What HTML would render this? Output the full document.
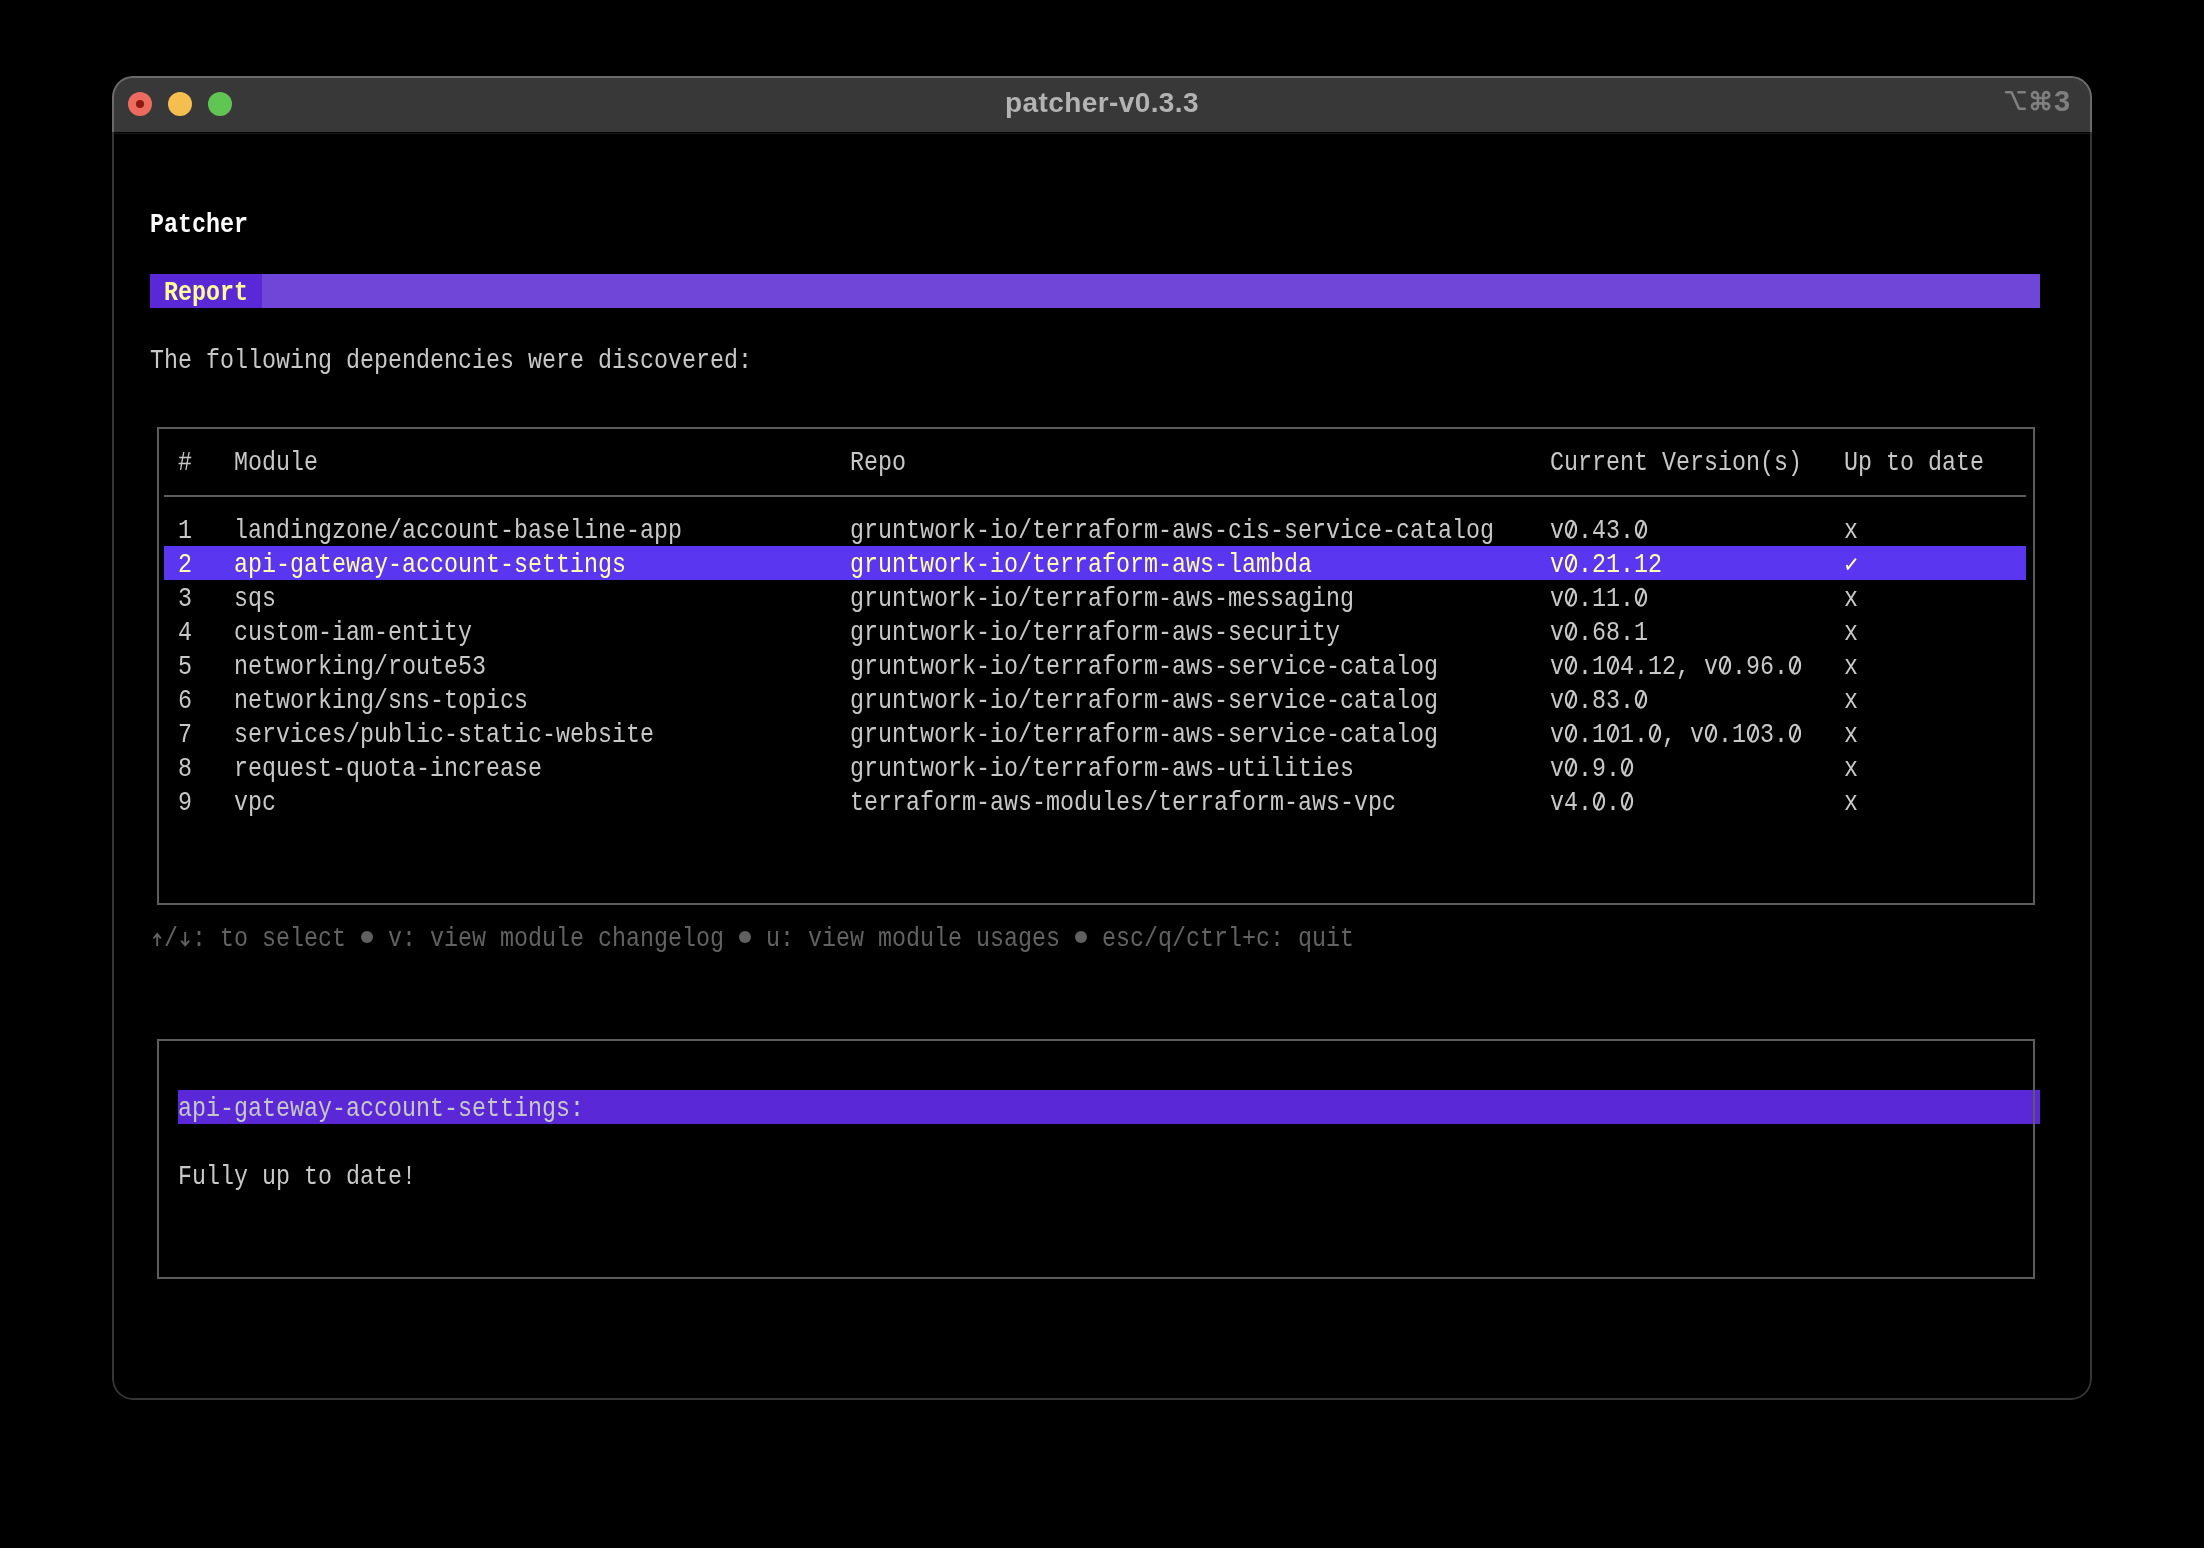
<!DOCTYPE html>
<html><head><meta charset="utf-8"><style>
html,body{margin:0;padding:0;background:#000;width:2204px;height:1548px;overflow:hidden;}
.win{position:absolute;left:112px;top:76px;width:1980px;height:1324px;border-radius:21px;background:#000;overflow:hidden;}
.tb{position:absolute;left:0;top:0;width:1980px;height:56px;background:#383838;}
.fr1{position:absolute;left:0;top:0;width:1980px;height:1324px;box-sizing:border-box;border:2px solid #363636;border-radius:21px;}
.fr2{position:absolute;left:0;top:0;width:1980px;height:56px;box-sizing:border-box;border:2px solid #6a6a6a;border-bottom:none;border-radius:21px 21px 0 0;}
.tl{position:absolute;width:24px;height:24px;border-radius:50%;top:16px;}
.title{position:absolute;left:0;width:1980px;top:0;height:56px;text-align:center;font-family:"Liberation Sans",sans-serif;font-weight:bold;font-size:28px;letter-spacing:0.4px;line-height:54px;color:#b3b3b3;will-change:transform;}
.t{position:absolute;will-change:transform;white-space:pre;font-family:"Liberation Mono",monospace;font-size:23.333px;line-height:34px;height:34px;transform-origin:0 23.2px;transform:scaleY(1.16);}
.r{position:absolute;}
</style></head><body>
<div class="win">
  <div class="tb"></div>
  <div style="position:absolute;left:0;top:56px;width:1980px;height:1px;background:#000"></div>
  <div style="position:absolute;left:0;top:57px;width:1980px;height:1px;background:#161616"></div>
  <div class="fr1"></div>
  <div class="fr2"></div>
  <div class="tl" style="left:16px;background:#ed6a5e"><div style="position:absolute;left:8px;top:8px;width:8px;height:8px;border-radius:50%;background:#8e1a10"></div></div>
  <div class="tl" style="left:56px;background:#f5bf4f"></div>
  <div class="tl" style="left:96px;background:#61c554"></div>
  <div class="title">patcher-v0.3.3</div>
  <svg style="position:absolute;left:1880px;top:8px" width="90" height="40" viewBox="1992 84 90 40">
    <g fill="none" stroke="#7f7f7f" stroke-width="2.6" stroke-linecap="round" stroke-linejoin="round">
      <path d="M2006.1 92.3 H2011.6 L2019 108.7 H2024.7"/>
      <path d="M2018.4 92.3 H2024.7"/>
      <path d="M2037.9 98 H2043.3 V103.4 H2037.9 Z M2037.9 98 V95.05 A2.95 2.95 0 1 0 2034.95 98 H2037.9 M2043.3 98 V95.05 A2.95 2.95 0 1 1 2046.25 98 H2043.3 M2043.3 103.4 V106.35 A2.95 2.95 0 1 0 2046.25 103.4 H2043.3 M2037.9 103.4 V106.35 A2.95 2.95 0 1 1 2034.95 103.4 H2037.9"/>
    </g>
  </svg>
  <div style="position:absolute;left:1942px;top:5px;font-family:'Liberation Sans',sans-serif;font-weight:bold;font-size:29px;line-height:40px;color:#7f7f7f;will-change:transform">3</div>
</div>
<div class="r" style="left:262px;top:274px;width:1778px;height:34px;background:#6f46d7"></div>
<div class="r" style="left:150px;top:274px;width:112px;height:34px;background:#5a28d6"></div>
<div class="r" style="left:164px;top:546px;width:1862px;height:34px;background:#5a36f0"></div>
<div class="r" style="left:178px;top:1090px;width:1862px;height:34px;background:#5a28d6"></div>
<div class="r" style="left:157px;top:427px;width:1878px;height:2px;background:#5c5c5c"></div>
<div class="r" style="left:157px;top:903px;width:1878px;height:2px;background:#5c5c5c"></div>
<div class="r" style="left:157px;top:427px;width:2px;height:478px;background:#5c5c5c"></div>
<div class="r" style="left:2033px;top:427px;width:2px;height:478px;background:#5c5c5c"></div>
<div class="r" style="left:164px;top:495px;width:1862px;height:2px;background:#5c5c5c"></div>
<div class="r" style="left:157px;top:1039px;width:1878px;height:2px;background:#5c5c5c"></div>
<div class="r" style="left:157px;top:1277px;width:1878px;height:2px;background:#5c5c5c"></div>
<div class="r" style="left:157px;top:1039px;width:2px;height:240px;background:#5c5c5c"></div>
<div class="r" style="left:2033px;top:1039px;width:2px;height:240px;background:#5c5c5c"></div>
<div class="t" style="top:208.8px;left:150px;color:#ffffff;font-weight:bold;">Patcher</div>
<div class="t" style="top:276.8px;left:164px;color:#fffb96;font-weight:bold;">Report</div>
<div class="t" style="top:344.8px;left:150px;color:#c8c8c8;">The following dependencies were discovered:</div>
<div class="t" style="top:446.8px;left:178px;color:#c8c8c8;">#</div>
<div class="t" style="top:446.8px;left:234px;color:#c8c8c8;">Module</div>
<div class="t" style="top:446.8px;left:850px;color:#c8c8c8;">Repo</div>
<div class="t" style="top:446.8px;left:1550px;color:#c8c8c8;">Current Version(s)</div>
<div class="t" style="top:446.8px;left:1844px;color:#c8c8c8;">Up to date</div>
<div class="t" style="top:514.8px;left:178px;color:#c8c8c8;">1</div>
<div class="t" style="top:514.8px;left:234px;color:#c8c8c8;">landingzone/account-baseline-app</div>
<div class="t" style="top:514.8px;left:850px;color:#c8c8c8;">gruntwork-io/terraform-aws-cis-service-catalog</div>
<svg class="r" style="left:1564px;top:512px" width="14" height="34"><ellipse cx="7" cy="17.2" rx="5.1" ry="8.5" fill="none" stroke="#c8c8c8" stroke-width="2.1"/><path d="M4.4 24.6 L9.8 10.2" stroke="#c8c8c8" stroke-width="2" fill="none"/></svg>
<svg class="r" style="left:1634px;top:512px" width="14" height="34"><ellipse cx="7" cy="17.2" rx="5.1" ry="8.5" fill="none" stroke="#c8c8c8" stroke-width="2.1"/><path d="M4.4 24.6 L9.8 10.2" stroke="#c8c8c8" stroke-width="2" fill="none"/></svg>
<div class="t" style="top:514.8px;left:1550px;color:#c8c8c8;">v .43. </div>
<div class="t" style="top:514.8px;left:1844px;color:#c8c8c8;">x</div>
<div class="t" style="top:548.8px;left:178px;color:#ffffaf;">2</div>
<div class="t" style="top:548.8px;left:234px;color:#ffffaf;">api-gateway-account-settings</div>
<div class="t" style="top:548.8px;left:850px;color:#ffffaf;">gruntwork-io/terraform-aws-lambda</div>
<svg class="r" style="left:1564px;top:546px" width="14" height="34"><ellipse cx="7" cy="17.2" rx="5.1" ry="8.5" fill="none" stroke="#ffffaf" stroke-width="2.1"/><path d="M4.4 24.6 L9.8 10.2" stroke="#ffffaf" stroke-width="2" fill="none"/></svg>
<div class="t" style="top:548.8px;left:1550px;color:#ffffaf;">v .21.12</div>
<svg class="r" style="left:1844px;top:546px" width="14" height="34" viewBox="0 0 14 34"><path d="M3 19.8 L3.8 22.9 L11.5 13.2" stroke="#ffffaf" stroke-width="2" fill="none" stroke-linecap="round" stroke-linejoin="round"/></svg>
<div class="t" style="top:582.8px;left:178px;color:#c8c8c8;">3</div>
<div class="t" style="top:582.8px;left:234px;color:#c8c8c8;">sqs</div>
<div class="t" style="top:582.8px;left:850px;color:#c8c8c8;">gruntwork-io/terraform-aws-messaging</div>
<svg class="r" style="left:1564px;top:580px" width="14" height="34"><ellipse cx="7" cy="17.2" rx="5.1" ry="8.5" fill="none" stroke="#c8c8c8" stroke-width="2.1"/><path d="M4.4 24.6 L9.8 10.2" stroke="#c8c8c8" stroke-width="2" fill="none"/></svg>
<svg class="r" style="left:1634px;top:580px" width="14" height="34"><ellipse cx="7" cy="17.2" rx="5.1" ry="8.5" fill="none" stroke="#c8c8c8" stroke-width="2.1"/><path d="M4.4 24.6 L9.8 10.2" stroke="#c8c8c8" stroke-width="2" fill="none"/></svg>
<div class="t" style="top:582.8px;left:1550px;color:#c8c8c8;">v .11. </div>
<div class="t" style="top:582.8px;left:1844px;color:#c8c8c8;">x</div>
<div class="t" style="top:616.8px;left:178px;color:#c8c8c8;">4</div>
<div class="t" style="top:616.8px;left:234px;color:#c8c8c8;">custom-iam-entity</div>
<div class="t" style="top:616.8px;left:850px;color:#c8c8c8;">gruntwork-io/terraform-aws-security</div>
<svg class="r" style="left:1564px;top:614px" width="14" height="34"><ellipse cx="7" cy="17.2" rx="5.1" ry="8.5" fill="none" stroke="#c8c8c8" stroke-width="2.1"/><path d="M4.4 24.6 L9.8 10.2" stroke="#c8c8c8" stroke-width="2" fill="none"/></svg>
<div class="t" style="top:616.8px;left:1550px;color:#c8c8c8;">v .68.1</div>
<div class="t" style="top:616.8px;left:1844px;color:#c8c8c8;">x</div>
<div class="t" style="top:650.8px;left:178px;color:#c8c8c8;">5</div>
<div class="t" style="top:650.8px;left:234px;color:#c8c8c8;">networking/route53</div>
<div class="t" style="top:650.8px;left:850px;color:#c8c8c8;">gruntwork-io/terraform-aws-service-catalog</div>
<svg class="r" style="left:1564px;top:648px" width="14" height="34"><ellipse cx="7" cy="17.2" rx="5.1" ry="8.5" fill="none" stroke="#c8c8c8" stroke-width="2.1"/><path d="M4.4 24.6 L9.8 10.2" stroke="#c8c8c8" stroke-width="2" fill="none"/></svg>
<svg class="r" style="left:1606px;top:648px" width="14" height="34"><ellipse cx="7" cy="17.2" rx="5.1" ry="8.5" fill="none" stroke="#c8c8c8" stroke-width="2.1"/><path d="M4.4 24.6 L9.8 10.2" stroke="#c8c8c8" stroke-width="2" fill="none"/></svg>
<svg class="r" style="left:1718px;top:648px" width="14" height="34"><ellipse cx="7" cy="17.2" rx="5.1" ry="8.5" fill="none" stroke="#c8c8c8" stroke-width="2.1"/><path d="M4.4 24.6 L9.8 10.2" stroke="#c8c8c8" stroke-width="2" fill="none"/></svg>
<svg class="r" style="left:1788px;top:648px" width="14" height="34"><ellipse cx="7" cy="17.2" rx="5.1" ry="8.5" fill="none" stroke="#c8c8c8" stroke-width="2.1"/><path d="M4.4 24.6 L9.8 10.2" stroke="#c8c8c8" stroke-width="2" fill="none"/></svg>
<div class="t" style="top:650.8px;left:1550px;color:#c8c8c8;">v .1 4.12, v .96. </div>
<div class="t" style="top:650.8px;left:1844px;color:#c8c8c8;">x</div>
<div class="t" style="top:684.8px;left:178px;color:#c8c8c8;">6</div>
<div class="t" style="top:684.8px;left:234px;color:#c8c8c8;">networking/sns-topics</div>
<div class="t" style="top:684.8px;left:850px;color:#c8c8c8;">gruntwork-io/terraform-aws-service-catalog</div>
<svg class="r" style="left:1564px;top:682px" width="14" height="34"><ellipse cx="7" cy="17.2" rx="5.1" ry="8.5" fill="none" stroke="#c8c8c8" stroke-width="2.1"/><path d="M4.4 24.6 L9.8 10.2" stroke="#c8c8c8" stroke-width="2" fill="none"/></svg>
<svg class="r" style="left:1634px;top:682px" width="14" height="34"><ellipse cx="7" cy="17.2" rx="5.1" ry="8.5" fill="none" stroke="#c8c8c8" stroke-width="2.1"/><path d="M4.4 24.6 L9.8 10.2" stroke="#c8c8c8" stroke-width="2" fill="none"/></svg>
<div class="t" style="top:684.8px;left:1550px;color:#c8c8c8;">v .83. </div>
<div class="t" style="top:684.8px;left:1844px;color:#c8c8c8;">x</div>
<div class="t" style="top:718.8px;left:178px;color:#c8c8c8;">7</div>
<div class="t" style="top:718.8px;left:234px;color:#c8c8c8;">services/public-static-website</div>
<div class="t" style="top:718.8px;left:850px;color:#c8c8c8;">gruntwork-io/terraform-aws-service-catalog</div>
<svg class="r" style="left:1564px;top:716px" width="14" height="34"><ellipse cx="7" cy="17.2" rx="5.1" ry="8.5" fill="none" stroke="#c8c8c8" stroke-width="2.1"/><path d="M4.4 24.6 L9.8 10.2" stroke="#c8c8c8" stroke-width="2" fill="none"/></svg>
<svg class="r" style="left:1606px;top:716px" width="14" height="34"><ellipse cx="7" cy="17.2" rx="5.1" ry="8.5" fill="none" stroke="#c8c8c8" stroke-width="2.1"/><path d="M4.4 24.6 L9.8 10.2" stroke="#c8c8c8" stroke-width="2" fill="none"/></svg>
<svg class="r" style="left:1648px;top:716px" width="14" height="34"><ellipse cx="7" cy="17.2" rx="5.1" ry="8.5" fill="none" stroke="#c8c8c8" stroke-width="2.1"/><path d="M4.4 24.6 L9.8 10.2" stroke="#c8c8c8" stroke-width="2" fill="none"/></svg>
<svg class="r" style="left:1704px;top:716px" width="14" height="34"><ellipse cx="7" cy="17.2" rx="5.1" ry="8.5" fill="none" stroke="#c8c8c8" stroke-width="2.1"/><path d="M4.4 24.6 L9.8 10.2" stroke="#c8c8c8" stroke-width="2" fill="none"/></svg>
<svg class="r" style="left:1746px;top:716px" width="14" height="34"><ellipse cx="7" cy="17.2" rx="5.1" ry="8.5" fill="none" stroke="#c8c8c8" stroke-width="2.1"/><path d="M4.4 24.6 L9.8 10.2" stroke="#c8c8c8" stroke-width="2" fill="none"/></svg>
<svg class="r" style="left:1788px;top:716px" width="14" height="34"><ellipse cx="7" cy="17.2" rx="5.1" ry="8.5" fill="none" stroke="#c8c8c8" stroke-width="2.1"/><path d="M4.4 24.6 L9.8 10.2" stroke="#c8c8c8" stroke-width="2" fill="none"/></svg>
<div class="t" style="top:718.8px;left:1550px;color:#c8c8c8;">v .1 1. , v .1 3. </div>
<div class="t" style="top:718.8px;left:1844px;color:#c8c8c8;">x</div>
<div class="t" style="top:752.8px;left:178px;color:#c8c8c8;">8</div>
<div class="t" style="top:752.8px;left:234px;color:#c8c8c8;">request-quota-increase</div>
<div class="t" style="top:752.8px;left:850px;color:#c8c8c8;">gruntwork-io/terraform-aws-utilities</div>
<svg class="r" style="left:1564px;top:750px" width="14" height="34"><ellipse cx="7" cy="17.2" rx="5.1" ry="8.5" fill="none" stroke="#c8c8c8" stroke-width="2.1"/><path d="M4.4 24.6 L9.8 10.2" stroke="#c8c8c8" stroke-width="2" fill="none"/></svg>
<svg class="r" style="left:1620px;top:750px" width="14" height="34"><ellipse cx="7" cy="17.2" rx="5.1" ry="8.5" fill="none" stroke="#c8c8c8" stroke-width="2.1"/><path d="M4.4 24.6 L9.8 10.2" stroke="#c8c8c8" stroke-width="2" fill="none"/></svg>
<div class="t" style="top:752.8px;left:1550px;color:#c8c8c8;">v .9. </div>
<div class="t" style="top:752.8px;left:1844px;color:#c8c8c8;">x</div>
<div class="t" style="top:786.8px;left:178px;color:#c8c8c8;">9</div>
<div class="t" style="top:786.8px;left:234px;color:#c8c8c8;">vpc</div>
<div class="t" style="top:786.8px;left:850px;color:#c8c8c8;">terraform-aws-modules/terraform-aws-vpc</div>
<svg class="r" style="left:1592px;top:784px" width="14" height="34"><ellipse cx="7" cy="17.2" rx="5.1" ry="8.5" fill="none" stroke="#c8c8c8" stroke-width="2.1"/><path d="M4.4 24.6 L9.8 10.2" stroke="#c8c8c8" stroke-width="2" fill="none"/></svg>
<svg class="r" style="left:1620px;top:784px" width="14" height="34"><ellipse cx="7" cy="17.2" rx="5.1" ry="8.5" fill="none" stroke="#c8c8c8" stroke-width="2.1"/><path d="M4.4 24.6 L9.8 10.2" stroke="#c8c8c8" stroke-width="2" fill="none"/></svg>
<div class="t" style="top:786.8px;left:1550px;color:#c8c8c8;">v4. . </div>
<div class="t" style="top:786.8px;left:1844px;color:#c8c8c8;">x</div>
<div class="t" style="top:922.8px;left:150px;color:#626262;"> / : to select   v: view module changelog   u: view module usages   esc/q/ctrl+c: quit</div>
<svg class="r" style="left:150px;top:920px" width="42" height="34" viewBox="150 920 42 34"><g fill="none" stroke="#626262" stroke-width="1.9" stroke-linecap="butt" stroke-linejoin="miter"><path d="M157.2 946 V934.5 M153.6 938.3 L157.2 934 L160.8 938.3"/><path d="M185.2 932 V945 M181.2 940.7 L185.2 945.3 L189.2 940.7"/></g></svg>
<div class="r" style="left:361px;top:931px;width:12px;height:12px;border-radius:50%;background:#606060"></div>
<div class="r" style="left:739px;top:931px;width:12px;height:12px;border-radius:50%;background:#606060"></div>
<div class="r" style="left:1075px;top:931px;width:12px;height:12px;border-radius:50%;background:#606060"></div>
<div class="t" style="top:1092.8px;left:178px;color:#c8c8c8;">api-gateway-account-settings:</div>
<div class="t" style="top:1160.8px;left:178px;color:#c8c8c8;">Fully up to date!</div>
</body></html>
